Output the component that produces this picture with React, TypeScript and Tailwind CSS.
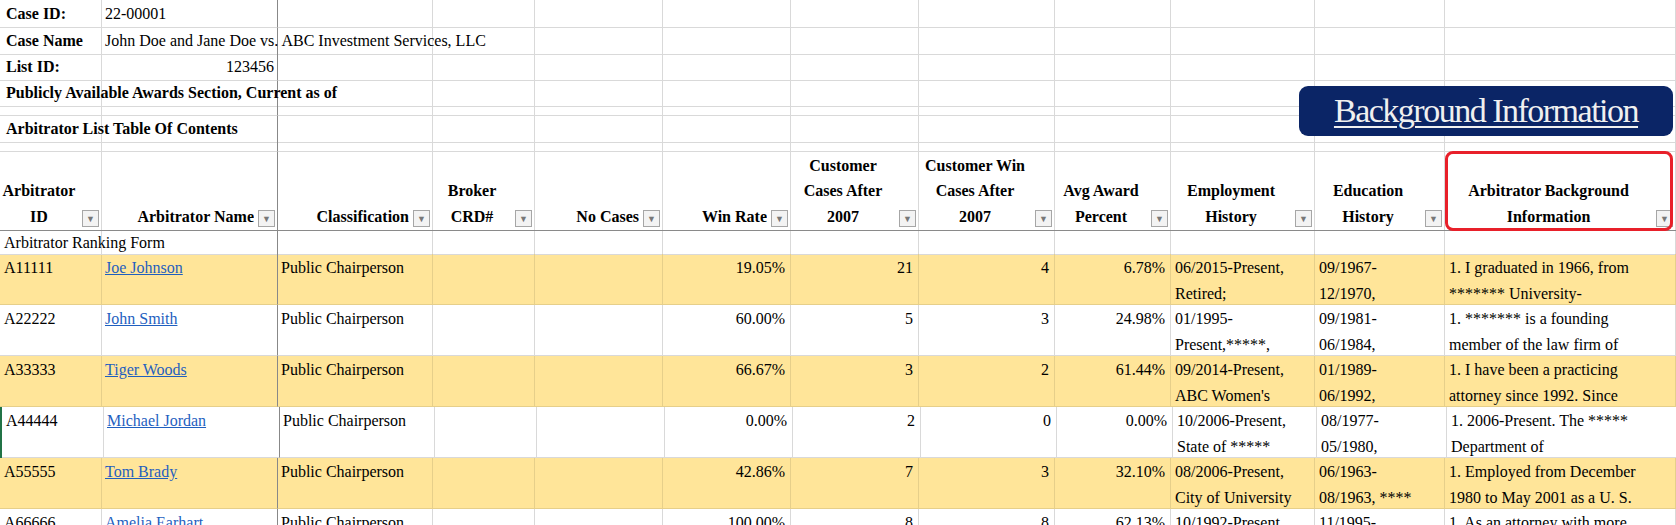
import React from "react";

const cols = "grid grid-cols-[102px_176px_155px_102px_128px_128px_128px_136px_116px_144px_130px_231px]";
const line = "border-r border-b border-[#d9d9d9]";

const Filter = () => (
  <span className="inline-flex items-center justify-center w-[17px] h-[17px] border border-[#a6a6a6] bg-[#f3f3f3] text-[9px] text-[#777] shrink-0 ml-1 mb-[2px]">▼</span>
);

const Blank = ({ h }: { h: string }) => (
  <div className={`${cols} ${h}`}>
    {Array.from({ length: 12 }).map((_, i) => (
      <div key={i} className={`${line} ${i === 1 ? "border-r-[#888]" : ""}`} />
    ))}
  </div>
);

const headers: [string[], string][] = [
  [["Arbitrator", "ID"], "center"],
  [["Arbitrator Name"], "end"],
  [["Classification"], "end"],
  [["Broker", "CRD#"], "center"],
  [["No Cases"], "end"],
  [["Win Rate"], "end"],
  [["Customer", "Cases After", "2007"], "center"],
  [["Customer Win", "Cases After", "2007"], "center"],
  [["Avg Award", "Percent"], "center"],
  [["Employment", "History"], "center"],
  [["Education", "History"], "center"],
  [["Arbitrator Background", "Information"], "center"],
];

const rows = [
  ["A11111", "Joe Johnson", "19.05%", "21", "4", "6.78%", ["06/2015-Present,", "Retired;"], ["09/1967-", "12/1970,"], ["1. I graduated in 1966, from", "******* University-"]],
  ["A22222", "John Smith", "60.00%", "5", "3", "24.98%", ["01/1995-", "Present,*****,"], ["09/1981-", "06/1984,"], ["1. ******* is a founding", "member of the law firm of"]],
  ["A33333", "Tiger Woods", "66.67%", "3", "2", "61.44%", ["09/2014-Present,", "ABC Women's"], ["01/1989-", "06/1992,"], ["1. I have been a practicing", "attorney since 1992. Since"]],
  ["A44444", "Michael Jordan", "0.00%", "2", "0", "0.00%", ["10/2006-Present,", "State of *****"], ["08/1977-", "05/1980,"], ["1. 2006-Present. The *****", "Department of"]],
  ["A55555", "Tom Brady", "42.86%", "7", "3", "32.10%", ["08/2006-Present,", "City of University"], ["06/1963-", "08/1963, ****"], ["1. Employed from December", "1980 to May 2001 as a U. S."]],
  ["A66666", "Amelia Earhart", "100.00%", "8", "8", "62.13%", ["10/1992-Present,", ""], ["11/1995-", ""], ["1. As an attorney with more", ""]],
] as const;

const topRows: [React.ReactNode, React.ReactNode, string][] = [
  [<b>Case ID:</b>, <span>22-00001</span>, "h-[28px]"],
  [<b className="whitespace-nowrap">Case Name</b>, <span className="whitespace-nowrap">John Doe and Jane Doe vs. ABC Investment Services, LLC</span>, "h-[26px]"],
  [<b>List ID:</b>, <span className="block text-right w-full">123456</span>, "h-[26px]"],
];

export default function App() {
  return (
    <div className="relative w-[1676px] h-[525px] overflow-hidden bg-white text-[16px] text-black leading-[26px]" style={{ fontFamily: '"Liberation Serif", "Times New Roman", serif' }}>
      {topRows.map(([a, b, h], ri) => (
        <div key={ri} className={`${cols} ${h}`}>
          <div className={`${line} px-[6px] whitespace-nowrap flex items-center overflow-hidden`}>{a}</div>
          <div className={`${line} border-r-[#888] px-[3px] flex items-center relative z-10`}>{b}</div>
          {Array.from({ length: 10 }).map((_, i) => <div key={i} className={line} />)}
        </div>
      ))}
      <div className={`${cols} h-[26px]`}>
        <div className={`${line} px-[6px] whitespace-nowrap flex items-center relative z-10`}><b>Publicly Available Awards Section, Current as of</b></div>
        <div className={`${line} border-r-[#888]`} />
        {Array.from({ length: 10 }).map((_, i) => <div key={i} className={line} />)}
      </div>
      <Blank h="h-[10px]" />
      <div className={`${cols} h-[26px]`}>
        <div className={`${line} px-[6px] whitespace-nowrap flex items-center relative z-10`}><b>Arbitrator List Table Of Contents</b></div>
        <div className={`${line} border-r-[#888]`} />
        {Array.from({ length: 10 }).map((_, i) => <div key={i} className={line} />)}
      </div>
      <Blank h="h-[10px]" />
      <div className={`${cols} h-[79px] border-b border-[#8a8a8a]`}>
        {headers.map(([lines, mode], i) => (
          <div key={i} className={`border-r border-[#d9d9d9] ${i === 1 ? "border-r-[#888]" : ""} flex items-end justify-end pr-[2px] pb-[1px] font-bold`}>
            <div className={`flex-1 flex flex-col ${mode === "center" ? "items-center" : "items-end"} leading-[25.5px] whitespace-nowrap overflow-hidden`}>
              {lines.map((l, j) => <span key={j}>{l}</span>)}
            </div>
            <Filter />
          </div>
        ))}
      </div>
      <div className={`${cols} h-[23px]`}>
        <div className={`${line} px-[4px] whitespace-nowrap leading-[23px] relative z-10`}>Arbitrator Ranking Form</div>
        <div className={`${line} border-r-[#888]`} />
        {Array.from({ length: 10 }).map((_, i) => <div key={i} className={line} />)}
      </div>
      {rows.map((r, ri) => {
        const bg = ri % 2 === 0 ? "bg-[#ffe599]" : "bg-white";
        const c = `${line} pt-[1px] ${ri % 2 === 0 ? "border-[#e6cf8a]" : ""}`;
        return (
          <div key={ri} className={`${cols} h-[51px] ${bg} ${ri === 3 ? "border-l-2 border-l-[#217346]" : ""}`}>
            <div className={`${c} px-[4px]`}>{r[0]}</div>
            <div className={`${c} border-r-[#888] px-[3px]`}><span className="text-[#1f5fbf] underline">{r[1]}</span></div>
            <div className={`${c} px-[3px] whitespace-nowrap`}>Public Chairperson</div>
            <div className={c} />
            <div className={c} />
            <div className={`${c} text-right px-[5px]`}>{r[2]}</div>
            <div className={`${c} text-right px-[5px]`}>{r[3]}</div>
            <div className={`${c} text-right px-[5px]`}>{r[4]}</div>
            <div className={`${c} text-right px-[5px]`}>{r[5]}</div>
            {[r[6], r[7], r[8]].map((t, k) => (
              <div key={k} className={`${c} px-[4px] whitespace-nowrap overflow-hidden`}>
                <div>{t[0]}</div>
                <div>{t[1]}</div>
              </div>
            ))}
          </div>
        );
      })}
      <div className="absolute left-[1299px] top-[86px] w-[374px] h-[50px] rounded-[9px] bg-[#0b2566] flex items-center justify-center">
        <span className="text-[#f0f0f0] text-[34px] leading-[40px] underline underline-offset-[4px] tracking-[-1.5px] decoration-[2px]">Background Information</span>
      </div>
      <div className="absolute left-[1445px] top-[151px] w-[228px] h-[80px] border-[3px] border-[#e8202a] rounded-[8px]" />
    </div>
  );
}
